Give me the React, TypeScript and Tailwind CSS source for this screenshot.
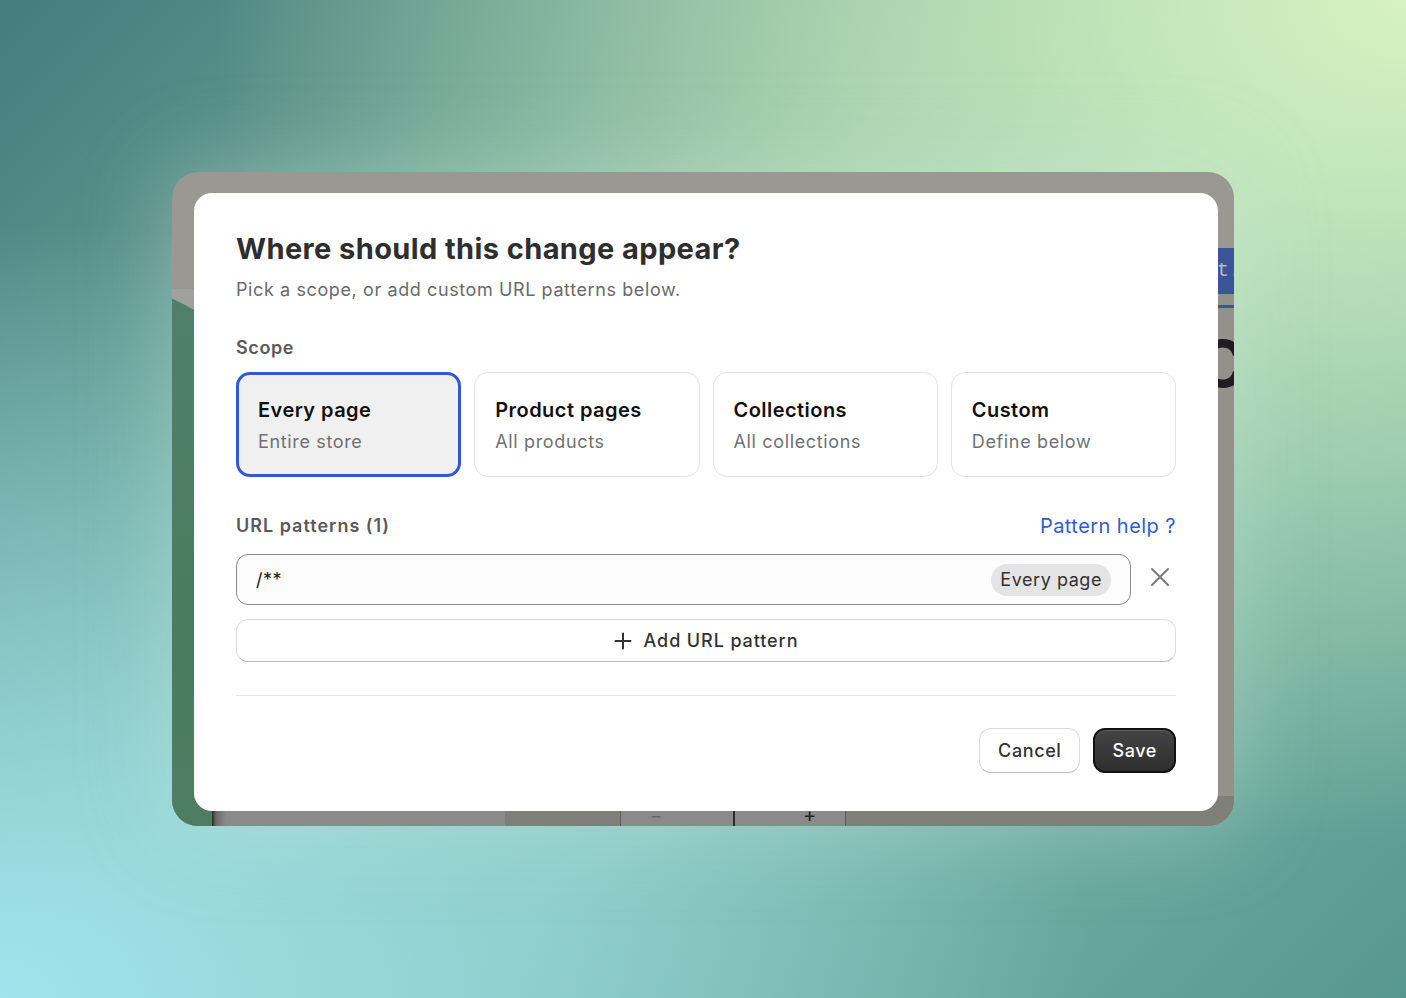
import React from "react";

const cards = [
  { title: "Every page", sub: "Entire store", selected: true },
  { title: "Product pages", sub: "All products", selected: false },
  { title: "Collections", sub: "All collections", selected: false },
  { title: "Custom", sub: "Define below", selected: false },
];

function WindowBackdrop() {
  return (
    <div className="absolute inset-0">
      {/* top bar */}
      <div className="absolute left-0 right-0 top-0 h-[117px] bg-[#9a9892]" />
      {/* body */}
      <div className="absolute left-0 right-0 top-[117px] bottom-0 bg-[#92918b]" />
      <div className="absolute left-0 top-[117px] w-[60px] h-[20px] bg-[#a0a0a0]" />
      {/* green shape on the left */}
      <div className="absolute left-[-420px] top-[104px] w-[640px] h-[900px] rounded-[50%] bg-[linear-gradient(180deg,#50806a_0%,#4c7c5e_40%,#4f7e6c_100%)]" />
      {/* blue button on the right */}
      <div className="absolute left-[1040px] top-[76px] w-[80px] h-[46px] bg-[#3a5497] flex items-center pl-[5px] text-[20px] text-[#b8bcc8] font-['Liberation_Mono',monospace]">
        t.
      </div>
      <div className="absolute left-[1040px] top-[133px] w-[80px] h-[3px] bg-[#3a5497]" />
      <div className="absolute left-[1026px] top-[160px] text-[64px] leading-[64px] font-bold text-[#1d1d22] font-['Inter',sans-serif]">
        C
      </div>
      {/* bottom toolbar */}
      <div className="absolute left-[40px] bottom-0 h-[30px] w-[293px] bg-[linear-gradient(90deg,#2a2a2a_0px,#6a6a6a_4px,#8a8a8a_14px,#8a8a8a_100%)]" />
      <div className="absolute left-[333px] right-0 bottom-0 h-[30px] bg-[#807e78] flex">
        <div className="w-[115px]" />
        <div className="w-[113px] border-l border-[#5c5c5c] bg-[#8a8a8a] flex items-end pb-[1px] pl-[29px] text-[#666] text-[18px] leading-[18px] font-['Inter',sans-serif]">
          −
        </div>
        <div className="w-[113px] border-l-2 border-r border-l-[#2c2c2c] border-r-[#5c5c5c] bg-[#8a8a8a] flex items-end pb-[1px] pl-[68px] text-[#222] text-[20px] leading-[20px] font-['Inter',sans-serif]">
          +
        </div>
      </div>
    </div>
  );
}

export default function App() {
  return (
    <div className="w-[1406px] h-[998px] flex items-center justify-center overflow-hidden font-['Inter',sans-serif] bg-[radial-gradient(ellipse_at_100%_0%,#d6f2c0_0%,rgba(214,242,192,0)_60%),radial-gradient(ellipse_at_0%_100%,#a0e4ed_0%,rgba(160,228,237,0)_55%),linear-gradient(135deg,#447b7d_0%,#7fb6a0_42%,#80bcae_60%,#56978f_100%)]">
      <div className="relative w-[1062px] h-[654px] rounded-[26px] overflow-hidden shadow-[0_0_90px_rgba(210,240,225,0.35)]">
        <WindowBackdrop />
        <div className="relative pl-[22px] pt-[21px]">
          <div className="w-[1024px] h-[618px] bg-white rounded-[18px] px-[42px] pt-[39px] pb-[38px] flex flex-col">
            <h1 className="text-[29px] leading-[34px] font-bold text-[#2e2e2e] tracking-[0.4px]">
              Where should this change appear?
            </h1>
            <p className="mt-[12px] text-[18px] leading-[24px] text-[#6a6a6a] tracking-[0.6px]">
              Pick a scope, or add custom URL patterns below.
            </p>

            <div className="mt-[34px] text-[18px] leading-[24px] font-semibold text-[#5a5a5a] tracking-[0.6px]">Scope</div>

            <div className="mt-[12px] grid grid-cols-4 gap-[13px]">
              {cards.map((c) => (
                <div
                  key={c.title}
                  className={
                    c.selected
                      ? "h-[105px] rounded-[14px] border-[3px] border-[#3159d3] bg-[#f0f0f0] pl-[19px] pt-[1px] flex flex-col justify-center"
                      : "h-[105px] rounded-[14px] border border-[#e2e2e2] bg-white pl-[20px] pt-[1px] flex flex-col justify-center"
                  }
                >
                  <div className="text-[20px] leading-[28px] font-semibold text-[#111] tracking-[0.45px]">{c.title}</div>
                  <div className="mt-[6px] text-[18px] leading-[24px] text-[#717171] tracking-[0.65px]">{c.sub}</div>
                </div>
              ))}
            </div>

            <div className="mt-[35px] h-[28px] flex items-center justify-between">
              <div className="text-[18px] leading-[28px] font-semibold text-[#5a5a5a] tracking-[1px]">URL patterns (1)</div>
              <div className="text-[20px] leading-[28px] text-[#2f5cd6] tracking-[0.45px]">Pattern help ?</div>
            </div>

            <div className="mt-[14px] flex items-center gap-[19px]">
              <div className="flex-1 h-[51px] rounded-[12px] border border-[#8a8a8a] bg-[#fcfcfc] flex items-center justify-between pl-[19px] pr-[19px]">
                <span className="text-[18px] text-[#222] tracking-[0.5px]">/**</span>
                <span className="h-[32px] px-[9px] rounded-full bg-[#e4e4e4] flex items-center text-[18px] text-[#333] tracking-[0.55px]">
                  Every page
                </span>
              </div>
              <svg width="20" height="20" viewBox="0 0 20 20" className="mr-[6px] mb-[6px]">
                <path d="M2 2 L18 18 M18 2 L2 18" stroke="#7a7a7a" strokeWidth="2" strokeLinecap="round" />
              </svg>
            </div>

            <button className="mt-[14px] h-[43px] w-full rounded-[12px] border border-[#dcdcdc] border-b-[#b9b9b9] bg-white flex items-center justify-center gap-[12px] text-[18px] font-medium text-[#333] tracking-[0.9px]">
              <svg width="18" height="18" viewBox="0 0 18 18">
                <path d="M9 1.5 V16.5 M1.5 9 H16.5" stroke="#333" strokeWidth="2" strokeLinecap="round" />
              </svg>
              Add URL pattern
            </button>

            <div className="mt-[33px] h-px bg-[#e8e8e8]" />

            <div className="mt-[32px] flex justify-end gap-[13px]">
              <button className="h-[45px] px-[18px] rounded-[12px] border border-[#dadada] border-b-[#bdbdbd] bg-white text-[18px] font-medium text-[#333] tracking-[0.6px]">
                Cancel
              </button>
              <button className="h-[45px] px-[17px] rounded-[12px] border-2 border-[#121212] bg-[linear-gradient(180deg,#444_0%,#2e2e2e_100%)] shadow-[inset_0_1px_0_rgba(255,255,255,0.15)] text-[18px] font-medium text-white tracking-[0.6px]">
                Save
              </button>
            </div>
          </div>
        </div>
      </div>
    </div>
  );
}
